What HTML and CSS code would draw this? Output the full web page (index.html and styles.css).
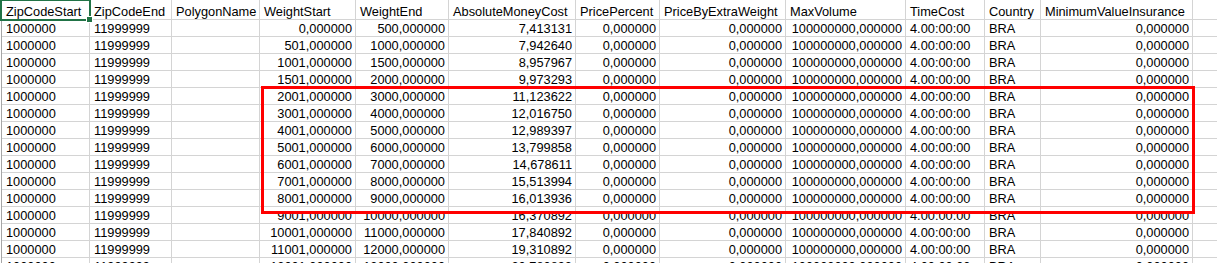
FILE: index.html
```html
<!doctype html>
<html lang="en">
    <head>
        <meta charset="UTF-8" />
        <title>Freight table</title>
        <link rel="stylesheet" href="styles.css">
    </head>
    <body>
        <div class="sheet-wrap">
            <div class="sheet">
                <div class="cell">ZipCodeStart</div>
                <div class="cell">ZipCodeEnd</div>
                <div class="cell">PolygonName</div>
                <div class="cell">WeightStart</div>
                <div class="cell">WeightEnd</div>
                <div class="cell">AbsoluteMoneyCost</div>
                <div class="cell">PricePercent</div>
                <div class="cell">PriceByExtraWeight</div>
                <div class="cell">MaxVolume</div>
                <div class="cell">TimeCost</div>
                <div class="cell">Country</div>
                <div class="cell">MinimumValueInsurance</div>
                <div class="cell"></div>

                <div class="cell">1000000</div><div class="cell">11999999</div><div class="cell"></div>
                <div class="cell num">0,000000</div><div class="cell num">500,000000</div><div class="cell num">7,413131</div>
                <div class="cell num">0,000000</div><div class="cell num">0,000000</div><div class="cell num">100000000,000000</div>
                <div class="cell">4.00:00:00</div><div class="cell">BRA</div><div class="cell num">0,000000</div><div class="cell"></div>

                <div class="cell">1000000</div><div class="cell">11999999</div><div class="cell"></div>
                <div class="cell num">501,000000</div><div class="cell num">1000,000000</div><div class="cell num">7,942640</div>
                <div class="cell num">0,000000</div><div class="cell num">0,000000</div><div class="cell num">100000000,000000</div>
                <div class="cell">4.00:00:00</div><div class="cell">BRA</div><div class="cell num">0,000000</div><div class="cell"></div>

                <div class="cell">1000000</div><div class="cell">11999999</div><div class="cell"></div>
                <div class="cell num">1001,000000</div><div class="cell num">1500,000000</div><div class="cell num">8,957967</div>
                <div class="cell num">0,000000</div><div class="cell num">0,000000</div><div class="cell num">100000000,000000</div>
                <div class="cell">4.00:00:00</div><div class="cell">BRA</div><div class="cell num">0,000000</div><div class="cell"></div>

                <div class="cell">1000000</div><div class="cell">11999999</div><div class="cell"></div>
                <div class="cell num">1501,000000</div><div class="cell num">2000,000000</div><div class="cell num">9,973293</div>
                <div class="cell num">0,000000</div><div class="cell num">0,000000</div><div class="cell num">100000000,000000</div>
                <div class="cell">4.00:00:00</div><div class="cell">BRA</div><div class="cell num">0,000000</div><div class="cell"></div>

                <div class="cell">1000000</div><div class="cell">11999999</div><div class="cell"></div>
                <div class="cell num">2001,000000</div><div class="cell num">3000,000000</div><div class="cell num">11,123622</div>
                <div class="cell num">0,000000</div><div class="cell num">0,000000</div><div class="cell num">100000000,000000</div>
                <div class="cell">4.00:00:00</div><div class="cell">BRA</div><div class="cell num">0,000000</div><div class="cell"></div>

                <div class="cell">1000000</div><div class="cell">11999999</div><div class="cell"></div>
                <div class="cell num">3001,000000</div><div class="cell num">4000,000000</div><div class="cell num">12,016750</div>
                <div class="cell num">0,000000</div><div class="cell num">0,000000</div><div class="cell num">100000000,000000</div>
                <div class="cell">4.00:00:00</div><div class="cell">BRA</div><div class="cell num">0,000000</div><div class="cell"></div>

                <div class="cell">1000000</div><div class="cell">11999999</div><div class="cell"></div>
                <div class="cell num">4001,000000</div><div class="cell num">5000,000000</div><div class="cell num">12,989397</div>
                <div class="cell num">0,000000</div><div class="cell num">0,000000</div><div class="cell num">100000000,000000</div>
                <div class="cell">4.00:00:00</div><div class="cell">BRA</div><div class="cell num">0,000000</div><div class="cell"></div>

                <div class="cell">1000000</div><div class="cell">11999999</div><div class="cell"></div>
                <div class="cell num">5001,000000</div><div class="cell num">6000,000000</div><div class="cell num">13,799858</div>
                <div class="cell num">0,000000</div><div class="cell num">0,000000</div><div class="cell num">100000000,000000</div>
                <div class="cell">4.00:00:00</div><div class="cell">BRA</div><div class="cell num">0,000000</div><div class="cell"></div>

                <div class="cell">1000000</div><div class="cell">11999999</div><div class="cell"></div>
                <div class="cell num">6001,000000</div><div class="cell num">7000,000000</div><div class="cell num">14,678611</div>
                <div class="cell num">0,000000</div><div class="cell num">0,000000</div><div class="cell num">100000000,000000</div>
                <div class="cell">4.00:00:00</div><div class="cell">BRA</div><div class="cell num">0,000000</div><div class="cell"></div>

                <div class="cell">1000000</div><div class="cell">11999999</div><div class="cell"></div>
                <div class="cell num">7001,000000</div><div class="cell num">8000,000000</div><div class="cell num">15,513994</div>
                <div class="cell num">0,000000</div><div class="cell num">0,000000</div><div class="cell num">100000000,000000</div>
                <div class="cell">4.00:00:00</div><div class="cell">BRA</div><div class="cell num">0,000000</div><div class="cell"></div>

                <div class="cell">1000000</div><div class="cell">11999999</div><div class="cell"></div>
                <div class="cell num">8001,000000</div><div class="cell num">9000,000000</div><div class="cell num">16,013936</div>
                <div class="cell num">0,000000</div><div class="cell num">0,000000</div><div class="cell num">100000000,000000</div>
                <div class="cell">4.00:00:00</div><div class="cell">BRA</div><div class="cell num">0,000000</div><div class="cell"></div>

                <div class="cell">1000000</div><div class="cell">11999999</div><div class="cell"></div>
                <div class="cell num">9001,000000</div><div class="cell num">10000,000000</div><div class="cell num">16,370892</div>
                <div class="cell num">0,000000</div><div class="cell num">0,000000</div><div class="cell num">100000000,000000</div>
                <div class="cell">4.00:00:00</div><div class="cell">BRA</div><div class="cell num">0,000000</div><div class="cell"></div>

                <div class="cell">1000000</div><div class="cell">11999999</div><div class="cell"></div>
                <div class="cell num">10001,000000</div><div class="cell num">11000,000000</div><div class="cell num">17,840892</div>
                <div class="cell num">0,000000</div><div class="cell num">0,000000</div><div class="cell num">100000000,000000</div>
                <div class="cell">4.00:00:00</div><div class="cell">BRA</div><div class="cell num">0,000000</div><div class="cell"></div>

                <div class="cell">1000000</div><div class="cell">11999999</div><div class="cell"></div>
                <div class="cell num">11001,000000</div><div class="cell num">12000,000000</div><div class="cell num">19,310892</div>
                <div class="cell num">0,000000</div><div class="cell num">0,000000</div><div class="cell num">100000000,000000</div>
                <div class="cell">4.00:00:00</div><div class="cell">BRA</div><div class="cell num">0,000000</div><div class="cell"></div>

                <div class="cell">1000000</div><div class="cell">11999999</div><div class="cell"></div>
                <div class="cell num">12001,000000</div><div class="cell num">13000,000000</div><div class="cell num">20,780892</div>
                <div class="cell num">0,000000</div><div class="cell num">0,000000</div><div class="cell num">100000000,000000</div>
                <div class="cell">4.00:00:00</div><div class="cell">BRA</div><div class="cell num">0,000000</div><div class="cell"></div>
            </div>

            <div class="selection"><span class="selection__handle"></span></div>
            <div class="highlight"></div>
        </div>
    </body>
</html>
```

FILE: styles.css
```css
* {
    padding: 0;
    margin: 0;
    box-sizing: border-box;
}

body {
    font-family: "Liberation Sans", Arial, sans-serif;
    background-color: #ffffff;
    color: #000000;
    overflow: hidden;
    height: 100vh;
}

.sheet-wrap {
    position: relative;
    padding-left: 1px;
}

.sheet {
    display: grid;
    grid-template-columns: 87px 81px 87px 95px 92px 126px 83px 125px 119px 78px 55px 151px 120px;
    grid-template-rows: 19px;
    grid-auto-rows: 16px;
    gap: 1px;
    width: max-content;
    background-color: #d4d4d4;
    border-left: 1px solid #a6a6a6;
}

.cell {
    display: flex;
    align-items: flex-end;
    background-color: #ffffff;
    padding: 0 3px 0 4px;
    font-size: 12.8px;
    line-height: 14px;
    white-space: nowrap;
    overflow: hidden;
}

.num {
    justify-content: flex-end;
}

/* active cell A1 */
.selection {
    position: absolute;
    left: 0;
    top: -1px;
    width: 91px;
    height: 22px;
    border: 2px solid #217346;
}

.selection__handle {
    position: absolute;
    right: -4px;
    bottom: -4px;
    width: 7px;
    height: 7px;
    background-color: #217346;
    border: 1px solid #ffffff;
}

/* red annotation box */
.highlight {
    position: absolute;
    left: 261px;
    top: 86px;
    width: 934px;
    height: 128px;
    border: 3px solid #ff0000;
}
```
